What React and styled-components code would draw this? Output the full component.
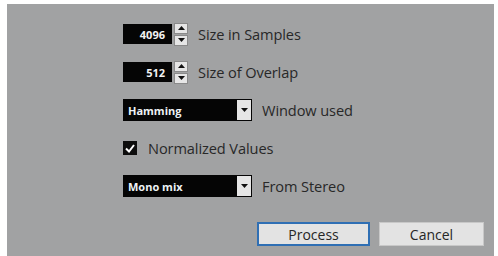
import React from "react";
import styled, { createGlobalStyle } from "styled-components";

const Global = createGlobalStyle`
  html, body { margin: 0; padding: 0; background: #ffffff; }
  body { font-family: "Open Sans", "Liberation Sans", Arial, sans-serif; }
`;

const Panel = styled.div`
  margin: 4px 4px 0 7px;
  height: 252px;
  background: #a1a2a3;
  box-sizing: border-box;
  padding: 18px 10px 0 116px;
  display: flex;
  flex-direction: column;
`;

const Form = styled.div`
  display: flex;
  flex-direction: column;
  gap: 14px;
`;

const Row = styled.div`
  height: 24px;
  display: flex;
  align-items: center;
  gap: ${(p) => p.$gap || 10}px;
`;

const Label = styled.span`
  font-size: 14.6px;
  color: #282828;
  letter-spacing: -0.1px;
  margin-top: -1px;
`;

const NumBox = styled.div`
  width: 49px;
  height: 20px;
  background: #050505;
  color: #f2f2f2;
  font-size: 11px;
  font-weight: 700;
  display: flex;
  align-items: center;
  justify-content: flex-end;
  padding-right: 7px;
  box-sizing: border-box;
`;

const Spin = styled.div`
  width: 14px;
  height: 23px;
  display: flex;
  flex-direction: column;
  gap: 1px;
  margin-left: -8px;
`;

const SpinBtn = styled.div`
  flex: 1;
  background: #e6e6e6;
  border: 1px solid #8a8a8a;
  display: flex;
  align-items: center;
  justify-content: center;
`;

const Tri = ({ down }) => (
  <svg width="7" height="4" viewBox="0 0 7 4">
    <polygon points={down ? "0,0 7,0 3.5,4" : "0,4 7,4 3.5,0"} fill="#111" />
  </svg>
);

const Select = styled.div`
  width: 129px;
  height: 22px;
  display: flex;
  background: #050505;
`;

const SelectText = styled.div`
  flex: 1;
  color: #eef2f6;
  font-size: 11px;
  font-weight: 700;
  display: flex;
  align-items: center;
  padding-left: 5px;
`;

const SelectArrow = styled.div`
  width: 14px;
  margin: 1px;
  background: #e6e6e6;
  display: flex;
  align-items: center;
  justify-content: center;
`;

const Check = styled.div`
  width: 14px;
  height: 14px;
  background: #0d0d0d;
  display: flex;
  align-items: center;
  justify-content: center;
`;

const Buttons = styled.div`
  margin-top: 24px;
  display: flex;
  justify-content: flex-end;
  gap: 9px;
`;

const Button = styled.div`
  width: ${(p) => p.$w}px;
  height: 24px;
  box-sizing: border-box;
  background: #e3e3e3;
  border: ${(p) => (p.$primary ? "2px solid #2f6fb4" : "1px solid #c8c8c8")};
  display: flex;
  align-items: center;
  justify-content: center;
  font-size: 14px;
  color: #262626;
`;

function NumberRow({ value, label }) {
  return (
    <Row>
      <NumBox>{value}</NumBox>
      <Spin>
        <SpinBtn><Tri /></SpinBtn>
        <SpinBtn><Tri down /></SpinBtn>
      </Spin>
      <Label>{label}</Label>
    </Row>
  );
}

function SelectRow({ value, label }) {
  return (
    <Row>
      <Select>
        <SelectText>{value}</SelectText>
        <SelectArrow><Tri down /></SelectArrow>
      </Select>
      <Label>{label}</Label>
    </Row>
  );
}

export default function App() {
  return (
    <>
      <Global />
      <Panel>
        <Form>
          <NumberRow value="4096" label="Size in Samples" />
          <NumberRow value="512" label="Size of Overlap" />
          <SelectRow value="Hamming" label="Window used" />
          <Row $gap={11}>
            <Check>
              <svg width="10" height="9" viewBox="0 0 10 9">
                <polyline points="1,4.5 4,7.5 9,1" fill="none" stroke="#fff" strokeWidth="2" />
              </svg>
            </Check>
            <Label>Normalized Values</Label>
          </Row>
          <SelectRow value="Mono mix" label="From Stereo" />
        </Form>
        <Buttons>
          <Button $w={113} $primary>Process</Button>
          <Button $w={105}>Cancel</Button>
        </Buttons>
      </Panel>
    </>
  );
}
